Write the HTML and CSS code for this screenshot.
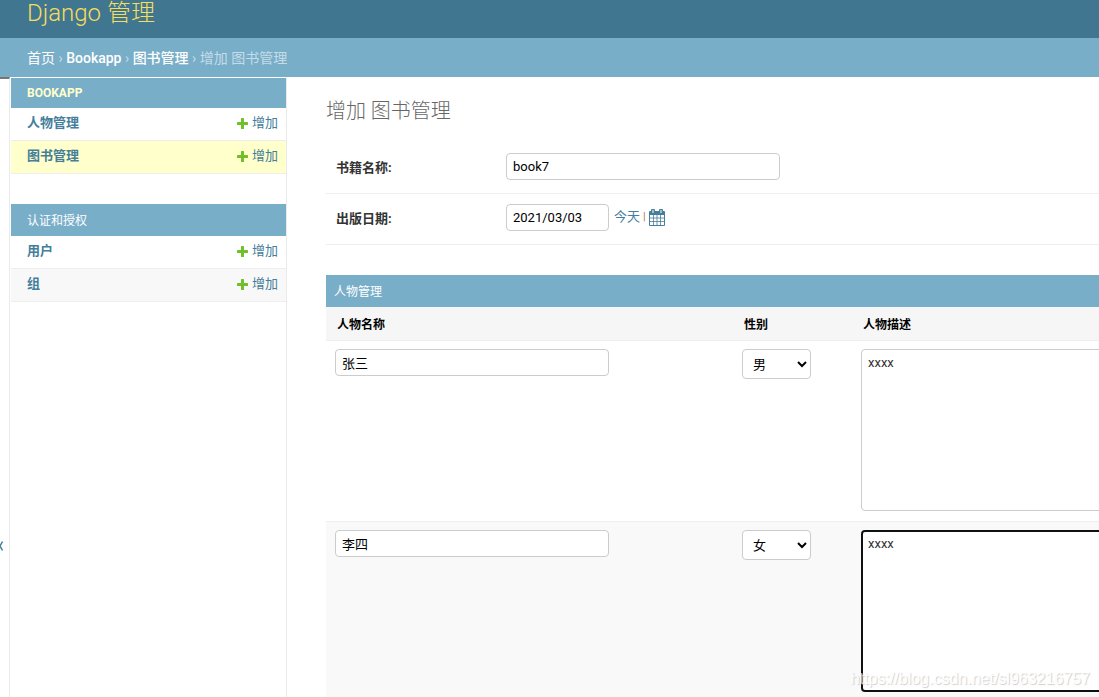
FILE: index.html
```html
<!DOCTYPE html>
<html lang="zh-Hans">
<head>
<meta charset="utf-8">
<title>增加 图书管理 | Django 管理</title>
<link rel="stylesheet" href="styles.css">
</head>
<body>
<svg class="defs" aria-hidden="true">
  <symbol id="plus" viewBox="0 0 11 11"><rect x="4" width="3" height="11" rx="0.600" fill="#70bf2b"/><rect y="4" width="11" height="3" rx="0.600" fill="#70bf2b"/></symbol>
  <symbol id="calendar" viewBox="0 0 16 17"><path fill="#447e9b" fill-rule="evenodd" d="M3 0h2q1 0 1 1v1h4V1q0-1 1-1h2q1 0 1 1v1h1q1 0 1 1v13q0 1-1 1H1q-1 0-1-1V3q0-1 1-1h1V1q0-1 1-1zM1 6v10h14V6zM3.500 1v3h1V1zm8 0v3h1V1z"/><path d="M4.500 6v10M8 6v10M11.500 6v10M1 9h14M1 12.500h14" fill="none" stroke="#447e9b" stroke-width="0.800"/></symbol>
</svg>
<header class="header"><a class="brand" href="#">Django 管理</a></header>
<nav class="breadcrumbs" aria-label="面包屑"><a class="home" href="#">首页</a> › <a href="#">Bookapp</a> › <a href="#">图书管理</a> › 增加 图书管理</nav>
<div class="shell">
  <button class="toggle" type="button" aria-label="切换导航"><svg width="3" height="10" viewBox="1 0 3 10"><path d="M3.500 0.500L1 5l2.500 4.500" fill="none" stroke="#447e9b" stroke-width="1.500"/></svg></button>
  <nav class="sidebar" aria-label="应用">
    <section class="module">
      <h2 class="caption caption-app"><a href="#">BOOKAPP</a></h2>
      <div class="model"><a class="name" href="#">人物管理</a><a class="add" href="#"><svg><use href="#plus"/></svg>增加</a></div>
      <div class="model current"><a class="name" href="#">图书管理</a><a class="add" href="#"><svg><use href="#plus"/></svg>增加</a></div>
    </section>
    <section class="module">
      <h2 class="caption"><a href="#">认证和授权</a></h2>
      <div class="model"><a class="name" href="#">用户</a><a class="add" href="#"><svg><use href="#plus"/></svg>增加</a></div>
      <div class="model alt"><a class="name" href="#">组</a><a class="add" href="#"><svg><use href="#plus"/></svg>增加</a></div>
    </section>
  </nav>
  <main class="content">
    <h1>增加 图书管理</h1>
    <form>
      <div class="form-row"><label for="title">书籍名称:</label><input class="text" id="title" type="text" value="book7"></div>
      <div class="form-row"><label for="date">出版日期:</label><input class="text date" id="date" type="text" value="2021/03/03"><span class="shortcuts"><a href="#">今天</a><span class="bar">|</span><a href="#" aria-label="选择日期"><svg class="calendar"><use href="#calendar"/></svg></a></span></div>
      <section class="inline">
        <h2>人物管理</h2>
        <table>
          <thead><tr><th class="col-name">人物名称</th><th class="col-sex">性别</th><th>人物描述</th></tr></thead>
          <tbody>
            <tr>
              <td><input class="text" type="text" value="张三" aria-label="人物名称"></td>
              <td><select aria-label="性别"><option selected>男</option><option>女</option></select></td>
              <td><textarea aria-label="人物描述">xxxx</textarea></td>
            </tr>
            <tr>
              <td><input class="text" type="text" value="李四" aria-label="人物名称"></td>
              <td><select aria-label="性别"><option>男</option><option selected>女</option></select></td>
              <td><textarea class="active" aria-label="人物描述">xxxx</textarea></td>
            </tr>
          </tbody>
        </table>
      </section>
    </form>
  </main>
</div>
<div class="watermark">https://blog.csdn.net/sl963216757</div>
</body>
</html>
```
FILE: styles.css
```css
* { box-sizing: border-box; }
html, body { height: 100%; }
body {
  margin: 0;
  display: flex;
  flex-direction: column;
  position: relative;
  overflow: hidden;
  background: #fff;
  color: #333;
  font: 13px/20px Roboto, "Noto Sans CJK SC", sans-serif;
}
a { color: #447e9b; text-decoration: none; }
h1, h2 { margin: 0; }
.defs { position: absolute; width: 0; height: 0; }

.header {
  flex: none;
  padding: 0 27px 12px;
  background: #417690;
  line-height: 26px;
}
.brand { display: block; color: #f5dd5d; font-size: 24px; font-weight: 300; }
.breadcrumbs {
  flex: none;
  padding: 10px 27px 9px;
  background: #79aec8;
  color: #c4dce8;
  font-size: 14px;
}
.breadcrumbs a { color: #fff; font-weight: 500; }
.breadcrumbs .home { font-weight: 400; }

.shell { display: flex; flex: 1; min-height: 0; }
.toggle {
  flex: none;
  width: 10px;
  padding: 316px 0 0;
  border: 0;
  border-top: 2px solid #777;
  border-right: 1px solid #eaeaea;
  background: #fff;
  display: flex;
  align-items: center;
  justify-content: flex-start;
}
.toggle svg { flex: none; }
.sidebar {
  flex: none;
  width: 277px;
  padding: 1px 0 0 1px;
  border-right: 1px solid #eaeaea;
}
.module { margin-bottom: 30px; }
.caption {
  padding: 7px 16px 5px;
  background: #79aec8;
  font-size: 12px;
  font-weight: 400;
  line-height: 20px;
}
.caption-app { padding: 5px 16px; font-weight: 700; }
.caption a { color: #fff; }
.caption-app a { color: #ffc; }
.model {
  display: flex;
  justify-content: space-between;
  padding: 5px 8px 7px 16px;
  border-bottom: 1px solid #eee;
}
.current { background: #ffc; }
.alt { background: #f8f8f8; }
.name { font-weight: 700; }
.add { display: flex; align-items: center; gap: 4px; }
.add svg { width: 11px; height: 11px; }

.content { flex: 1; min-width: 0; padding: 21px 0 0 39px; overflow: hidden; }
h1 { margin-bottom: 19px; color: #666; font-size: 20px; font-weight: 300; line-height: 26px; }
.form-row {
  display: flex;
  align-items: flex-start;
  height: 51px;
  padding: 10px;
  border-bottom: 1px solid #eee;
}
.form-row label { width: 170px; padding-top: 5px; font-weight: 700; }
.text, select, textarea {
  border: 1px solid #ccc;
  border-radius: 4px;
  background: #fff;
  color: #000;
  font: 13px/17px Roboto, "Noto Sans CJK SC", sans-serif;
}
.text { display: block; width: 274px; height: 27px; padding: 4px 6px; }
.date { width: 103px; }
.shortcuts { display: flex; align-items: center; gap: 3px; padding: 3px 0 0 5px; }
.bar { color: #b07a3c; font-size: 11px; }
.calendar { display: block; width: 16px; height: 17px; }

.inline { margin-top: 30px; }
.inline h2 {
  padding: 7px 8px 5px;
  background: #79aec8;
  color: #fff;
  font-size: 12px;
  font-weight: 400;
}
table { border-collapse: separate; border-spacing: 0; }
th {
  padding: 8px 11px 5px;
  border-bottom: 1px solid #eee;
  background: #f6f6f6;
  color: #000;
  font-size: 12px;
  text-align: left;
}
.col-name { width: 407px; min-width: 407px; }
.col-sex { width: 119px; min-width: 119px; }
td { padding: 8px 8px 10px 9px; border-bottom: 1px solid #eee; vertical-align: top; }
tbody tr:nth-child(2) { background: #f9f9f9; }
select { display: block; width: 69px; height: 30px; padding: 0 6px; }
textarea { display: block; width: 610px; height: 162px; padding: 4px 6px; color: #333; resize: none; }
textarea.active { padding: 3px 5px; border: 2px solid #101010; }

.watermark {
  position: absolute;
  right: 9px;
  bottom: 8px;
  color: #fff;
  font: 16px/20px "Liberation Sans", sans-serif;
  text-shadow: 1px 1px 1px #bbb;
  opacity: 0.7;
  pointer-events: none;
}
```
